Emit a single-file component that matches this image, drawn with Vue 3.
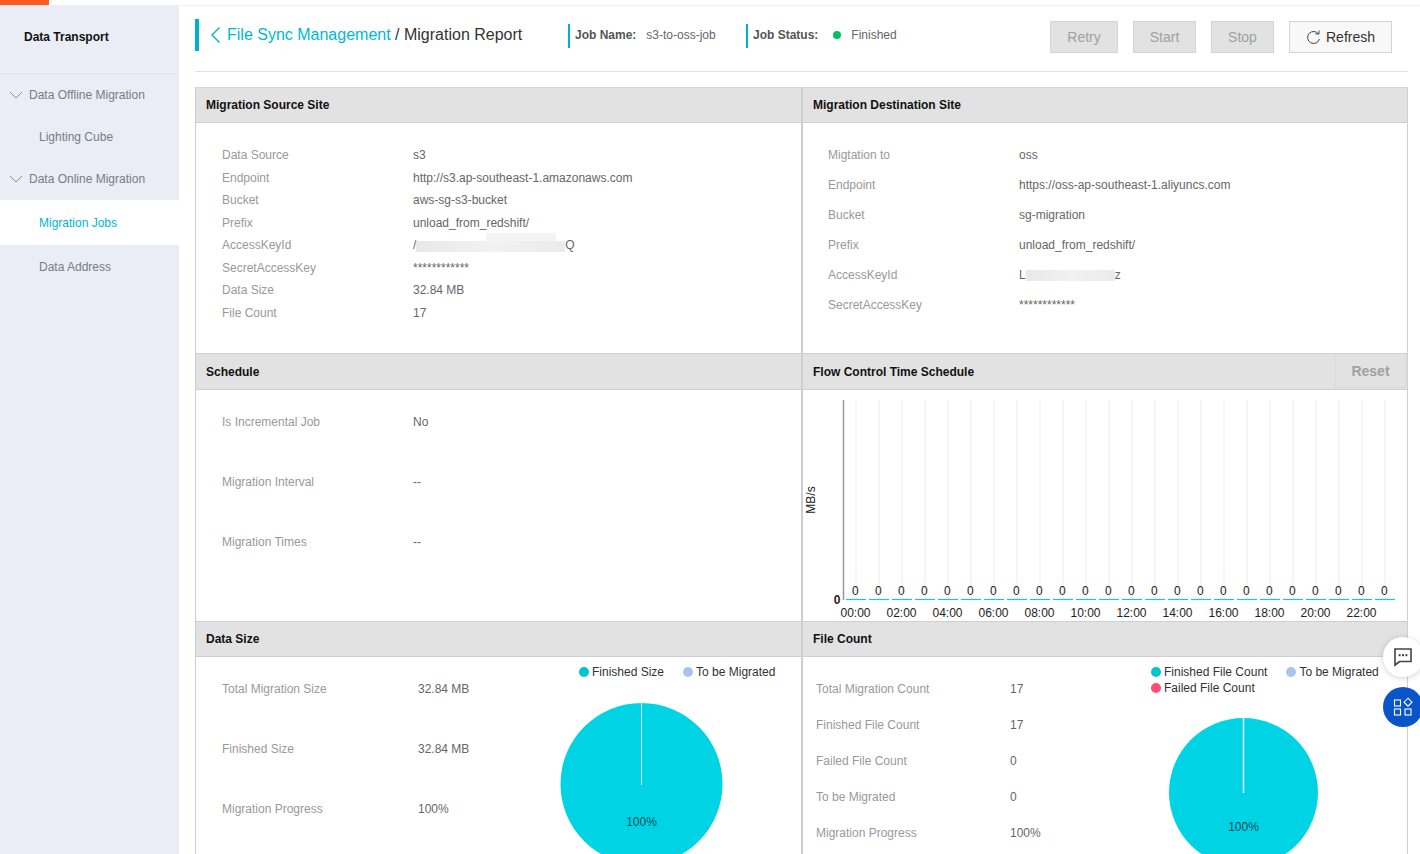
<script setup>
const menu = [
  { label: 'Data Offline Migration', group: true, h: 42 },
  { label: 'Lighting Cube', h: 42 },
  { label: 'Data Online Migration', group: true, h: 42 },
  { label: 'Migration Jobs', active: true, h: 45 },
  { label: 'Data Address', h: 44 },
]
const source = [
  ['Data Source', 's3'],
  ['Endpoint', 'http://s3.ap-southeast-1.amazonaws.com'],
  ['Bucket', 'aws-sg-s3-bucket'],
  ['Prefix', 'unload_from_redshift/'],
  ['AccessKeyId', '/', 'Q', 'mask-a'],
  ['SecretAccessKey', '************'],
  ['Data Size', '32.84 MB'],
  ['File Count', '17'],
]
const dest = [
  ['Migtation to', 'oss'],
  ['Endpoint', 'https://oss-ap-southeast-1.aliyuncs.com'],
  ['Bucket', 'sg-migration'],
  ['Prefix', 'unload_from_redshift/'],
  ['AccessKeyId', 'L', 'z', 'mask-b'],
  ['SecretAccessKey', '************'],
]
const schedule = [
  ['Is Incremental Job', 'No'],
  ['Migration Interval', '--'],
  ['Migration Times', '--'],
]
const sizeRows = [
  ['Total Migration Size', '32.84 MB'],
  ['Finished Size', '32.84 MB'],
  ['Migration Progress', '100%'],
]
const countRows = [
  ['Total Migration Count', '17'],
  ['Finished File Count', '17'],
  ['Failed File Count', '0'],
  ['To be Migrated', '0'],
  ['Migration Progress', '100%'],
]
const hours = Array.from({ length: 24 }, (_, i) => i)
const pad = (h) => String(h).padStart(2, '0') + ':00'
</script>

<template>
  <div class="page">
    <div class="topbar"><div class="topmark"></div></div>
    <div class="shell">
      <aside class="side">
        <div class="side-title">Data Transport</div>
        <div
          v-for="m in menu"
          :key="m.label"
          class="menu-item"
          :class="{ group: m.group, active: m.active }"
          :style="{ height: m.h + 'px' }"
        >
          <svg v-if="m.group" class="caret" width="14" height="8" viewBox="0 0 14 8">
            <path d="M1 1l6 6 6-6" fill="none" stroke="#8a8f99" stroke-width="1" />
          </svg>
          {{ m.label }}
        </div>
      </aside>

      <main class="main">
        <header class="head">
          <div class="crumb">
            <svg class="back" width="11" height="18" viewBox="0 0 11 18">
              <path d="M9.5 1.5L2 9l7.5 7.5" fill="none" stroke="#00b0d0" stroke-width="1.4" />
            </svg>
            <span class="crumb-link">File Sync Management</span>
            <span class="crumb-rest">&nbsp;/ Migration Report</span>
          </div>
          <div class="job job-name"><b>Job Name:</b><span>s3-to-oss-job</span></div>
          <div class="job job-status"><b>Job Status:</b><i class="dot"></i><span>Finished</span></div>
          <div class="btns">
            <button class="btn b-retry">Retry</button>
            <button class="btn b-start">Start</button>
            <button class="btn b-stop">Stop</button>
            <button class="btn b-refresh">
              <svg width="15" height="15" viewBox="0 0 15 15">
                <path d="M12.6 4.2A6 6 0 1 0 13.4 9" fill="none" stroke="#444" stroke-width="1" />
                <path d="M9.4 3.9h3.6V.6" fill="none" stroke="#444" stroke-width="1" />
              </svg>
              Refresh
            </button>
          </div>
        </header>

        <div class="grid">
          <section class="panel">
            <div class="phead">Migration Source Site</div>
            <div class="kv kv-source">
              <div v-for="r in source" :key="r[0]" class="row">
                <span class="k">{{ r[0] }}</span>
                <span class="v">{{ r[1] }}<i v-if="r[3]" class="mask" :class="r[3]"></i>{{ r[2] }}</span>
              </div>
            </div>
          </section>
          <section class="panel">
            <div class="phead">Migration Destination Site</div>
            <div class="kv kv-dest">
              <div v-for="r in dest" :key="r[0]" class="row">
                <span class="k">{{ r[0] }}</span>
                <span class="v">{{ r[1] }}<i v-if="r[3]" class="mask" :class="r[3]"></i>{{ r[2] }}</span>
              </div>
            </div>
          </section>

          <section class="panel tall">
            <div class="phead">Schedule</div>
            <div class="kv kv-sched">
              <div v-for="r in schedule" :key="r[0]" class="row">
                <span class="k">{{ r[0] }}</span>
                <span class="v">{{ r[1] }}</span>
              </div>
            </div>
          </section>
          <section class="panel tall">
            <div class="phead">Flow Control Time Schedule<button class="reset">Reset</button></div>
            <svg class="flow" width="605" height="231" viewBox="803 390 605 231">
              <line
                v-for="h in hours"
                :key="'g' + h"
                :x1="856 + 23 * h"
                :x2="856 + 23 * h"
                y1="400"
                y2="599"
                stroke="#ececec"
              />
              <line x1="843.5" x2="843.5" y1="400" y2="600" stroke="#999" stroke-width="1.5" />
              <line
                v-for="h in hours"
                :key="'b' + h"
                :x1="846 + 23 * h"
                :x2="866 + 23 * h"
                y1="599.5"
                y2="599.5"
                stroke="#1cc8d6"
                stroke-width="1.2"
              />
              <text
                v-for="h in hours"
                :key="'t' + h"
                :x="855.3 + 23 * h"
                y="595"
                class="sv"
              >0</text>
              <text
                v-for="h in hours.filter((x) => x % 2 === 0)"
                :key="'l' + h"
                :x="855.5 + 23 * h"
                y="617"
                class="sl"
              >{{ pad(h) }}</text>
              <text x="837" y="604" class="sz">0</text>
              <text x="0" y="0" class="su" transform="translate(815 500) rotate(-90)">MB/s</text>
            </svg>
          </section>

          <section class="panel">
            <div class="phead">Data Size</div>
            <div class="split">
              <div class="kv kv-size">
                <div v-for="r in sizeRows" :key="r[0]" class="row">
                  <span class="k">{{ r[0] }}</span>
                  <span class="v">{{ r[1] }}</span>
                </div>
              </div>
              <div class="chart chart-size">
                <div class="legend">
                  <span class="lg"><i class="ld teal"></i>Finished Size</span>
                  <span class="lg"><i class="ld blue"></i>To be Migrated</span>
                </div>
                <svg class="pie" width="200" height="170" viewBox="0 0 200 170">
                  <circle cx="101.5" cy="81" r="81" fill="#00d4e4" />
                  <line x1="101.5" x2="101.5" y1="0" y2="82" stroke="#e8fbfd" stroke-width="1" />
                  <text x="101.5" y="123" class="pct">100%</text>
                </svg>
              </div>
            </div>
          </section>
          <section class="panel">
            <div class="phead">File Count</div>
            <div class="split">
              <div class="kv kv-count">
                <div v-for="r in countRows" :key="r[0]" class="row">
                  <span class="k">{{ r[0] }}</span>
                  <span class="v">{{ r[1] }}</span>
                </div>
              </div>
              <div class="chart chart-count">
                <div class="legend">
                  <span class="lg"><i class="ld teal"></i>Finished File Count</span>
                  <span class="lg"><i class="ld blue"></i>To be Migrated</span>
                  <span class="lg"><i class="ld pink"></i>Failed File Count</span>
                </div>
                <svg class="pie" width="200" height="170" viewBox="0 0 200 170">
                  <circle cx="74.5" cy="74.5" r="74.5" fill="#00d4e4" />
                  <line x1="74.5" x2="74.5" y1="0" y2="75" stroke="#e8fbfd" stroke-width="1.5" />
                  <text x="74.5" y="113" class="pct">100%</text>
                </svg>
              </div>
            </div>
          </section>
        </div>
      </main>
    </div>

    <div class="fab fab-chat">
      <svg width="20" height="20" viewBox="0 0 20 20">
        <path d="M2 2h16v12.5H6.5L2 18z" fill="none" stroke="#444" stroke-width="1.6" stroke-linejoin="miter" />
        <rect x="5.6" y="7.2" width="2" height="2" fill="#444" />
        <rect x="9" y="7.2" width="2" height="2" fill="#444" />
        <rect x="12.4" y="7.2" width="2" height="2" fill="#444" />
      </svg>
    </div>
    <div class="fab fab-apps">
      <svg width="20" height="20" viewBox="0 0 20 20">
        <g fill="none" stroke="#fff" stroke-width="1.1">
          <rect x="1.5" y="3" width="6" height="6" />
          <rect x="1.5" y="12" width="6" height="6" />
          <rect x="12" y="12" width="6" height="6" />
          <path d="M15 1.2l4 4-4 4-4-4z" />
        </g>
      </svg>
    </div>
  </div>
</template>

<style scoped>
.page {
  height: 854px;
  overflow: hidden;
  background: #fff;
  font-family: "Liberation Sans", Arial, sans-serif;
  font-size: 12px;
  color: #666;
}
.topbar {
  height: 5px;
  border-bottom: 1px solid #f1f1f1;
}
.topmark {
  width: 49px;
  height: 5px;
  background: #ff5a1f;
}
.shell {
  display: flex;
  height: 848px;
}
.side {
  width: 179px;
  flex: none;
  background: #eaedf5;
}
.side-title {
  height: 68px;
  box-sizing: border-box;
  padding: 24px 0 0 24px;
  font-weight: 700;
  line-height: 14px;
  color: #111;
  border-bottom: 1px solid #e0e2e8;
}
.menu-item {
  display: flex;
  align-items: center;
  box-sizing: border-box;
  padding-left: 39px;
  color: #777c86;
}
.menu-item.group {
  padding-left: 9px;
}
.caret {
  margin-right: 6px;
}
.menu-item.active {
  background: #fff;
  color: #00b4d0;
}
.main {
  flex: 1;
  min-width: 0;
  padding: 0 12px 0 16px;
}
.head {
  position: relative;
  display: flex;
  align-items: flex-start;
  height: 66px;
  box-sizing: border-box;
  border-bottom: 1px solid #e0e0e0;
}
.crumb {
  display: flex;
  align-items: center;
  width: 373px;
  height: 32px;
  margin-top: 13px;
  box-sizing: border-box;
  padding: 0 0 1px 11px;
  border-left: 4px solid #00b0d0;
  font-size: 16px;
  white-space: nowrap;
}
.back {
  margin-right: 6px;
}
.crumb-link {
  color: #00b8d4;
}
.crumb-rest {
  color: #333;
}
.job {
  display: flex;
  align-items: center;
  height: 24px;
  margin-top: 18px;
  padding: 0 0 2px 5px;
  box-sizing: border-box;
  border-left: 2px solid #00b0d0;
  white-space: nowrap;
}
.job b {
  color: #555;
}
.job-name {
  width: 178px;
}
.job-name b {
  margin-right: 10px;
}
.job-status b {
  margin-right: 15px;
}
.dot {
  width: 8px;
  height: 8px;
  border-radius: 50%;
  background: #00c060;
  margin-right: 10px;
}
.btns {
  display: flex;
  gap: 15px;
  margin-left: auto;
  margin-top: 15px;
  margin-right: 16px;
}
.btn {
  height: 32px;
  box-sizing: border-box;
  border: 1px solid #d4d4d4;
  background: #e2e2e2;
  color: #a0a0a0;
  font: 14px "Liberation Sans", Arial, sans-serif;
  padding: 0;
}
.b-retry { width: 68px; }
.b-start { width: 63px; }
.b-stop { width: 63px; }
.b-refresh {
  width: 103px;
  background: #f8f8f8;
  color: #333;
  display: flex;
  align-items: center;
  justify-content: center;
  gap: 5px;
}
.grid {
  display: grid;
  grid-template-columns: 607px 606px;
  grid-template-rows: 266px 268px 300px;
  margin-top: 15px;
}
.panel {
  box-sizing: border-box;
  border: 1px solid #cfcfcf;
  border-bottom: none;
  min-width: 0;
}
.panel:nth-child(-n + 2) {
  border-top-color: #d6d6d6;
}
.phead {
  position: relative;
  height: 35px;
  box-sizing: border-box;
  padding-left: 10px;
  line-height: 34px;
  background: #e2e2e2;
  border-bottom: 1px solid #cfcfcf;
  color: #111;
  font-weight: 700;
}
.tall .phead {
  height: 36px;
  line-height: 36px;
}
.reset {
  position: absolute;
  top: 1px;
  right: 1px;
  width: 71px;
  height: 33px;
  padding: 0;
  border: 1px solid #d8d8d8;
  border-top: none;
  background: #e2e2e2;
  color: #a0a0a0;
  font: 700 14px "Liberation Sans", Arial, sans-serif;
}
.kv .row {
  display: flex;
  align-items: center;
}
.k {
  color: #999;
  flex: none;
}
.v {
  position: relative;
  color: #666;
  white-space: nowrap;
}
.kv-source { padding-top: 21px; }
.kv-source .row { height: 22.5px; }
.kv-dest { padding-top: 17px; }
.kv-dest .row { height: 30px; }
.kv-sched { padding-top: 2px; }
.kv-sched .row { height: 60px; }
.kv-source .k,
.kv-sched .k {
  width: 191px;
  margin-left: 26px;
}
.kv-dest .k {
  width: 191px;
  margin-left: 25px;
}
.split {
  display: flex;
}
.kv-size {
  width: 344px;
  flex: none;
  padding-top: 2px;
}
.kv-size .row { height: 60px; }
.kv-size .k {
  width: 196px;
  margin-left: 26px;
}
.kv-count {
  width: 327px;
  flex: none;
  padding-top: 14px;
}
.kv-count .row { height: 36px; }
.kv-count .k {
  width: 194px;
  margin-left: 13px;
}
.mask {
  display: inline-block;
  position: relative;
  vertical-align: middle;
  height: 11px;
  background: linear-gradient(90deg, #e8e8e8, #f2f2f2 50%, #ebebeb);
}
.mask-a { width: 149px; }
.mask-a::after {
  content: "";
  position: absolute;
  left: 70px;
  top: -8px;
  width: 70px;
  height: 8px;
  background: #f4f4f4;
}
.mask-b { width: 89px; }
.chart { flex: 1; min-width: 0; }
.legend {
  display: flex;
  flex-wrap: wrap;
  line-height: 16px;
  padding-top: 7px;
  color: #333;
}
.lg {
  display: inline-flex;
  align-items: center;
  white-space: nowrap;
  margin-right: 19px;
}
.ld {
  width: 10px;
  height: 10px;
  border-radius: 50%;
  margin-right: 3px;
}
.teal { background: #00c5d0; }
.blue { background: #a9c4e8; }
.pink { background: #ff4d75; }
.chart-size .legend { padding-left: 39px; }
.chart-count .legend { padding-left: 21px; }
.pie { display: block; }
.chart-size .pie { margin-top: 23px; }
.chart-count .pie { margin-top: 22px; margin-left: 39px; }
.flow { display: block; }
.flow text { font-family: "Liberation Sans", Arial, sans-serif; font-size: 12px; }
.sv, .sl { text-anchor: middle; fill: #222; }
.sz { text-anchor: middle; fill: #222; font-weight: 700; }
.su { text-anchor: middle; fill: #222; }
.pct { text-anchor: middle; font-size: 12px; fill: #0a4a5a; font-family: "Liberation Sans", Arial, sans-serif; }
.fab {
  position: fixed;
  left: 1383px;
  width: 40px;
  height: 40px;
  border-radius: 50%;
  display: flex;
  align-items: center;
  justify-content: center;
  box-sizing: border-box;
}
.fab-chat {
  top: 637px;
  background: #fff;
  box-shadow: 0 1px 6px rgba(0, 0, 0, 0.18);
}
.fab-apps {
  top: 687px;
  background: #0a54c9;
}
</style>

<style>
html, body { margin: 0; overflow: hidden; }
</style>
